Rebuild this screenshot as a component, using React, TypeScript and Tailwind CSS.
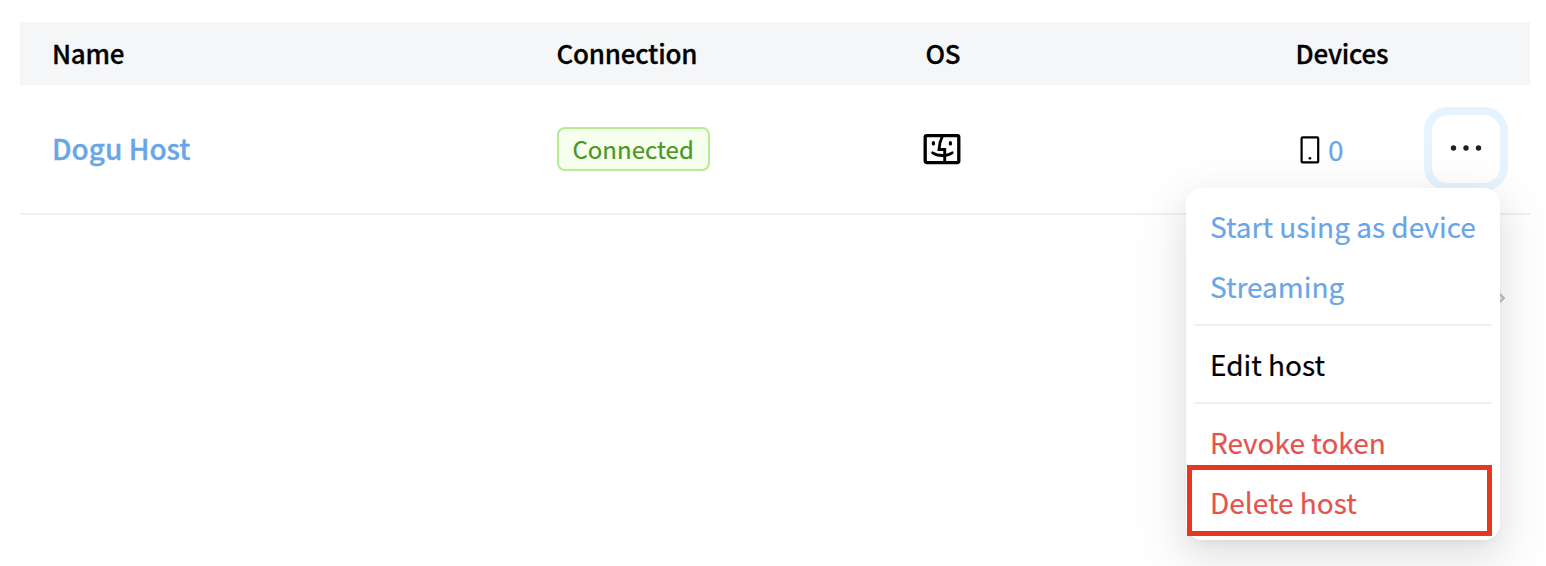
import React from "react";

const columns = "grid grid-cols-[504.5px_369px_370px_1fr] items-center pl-8";

function FinderIcon() {
  return (
    <svg width="38" height="32" viewBox="0 0 38 32" fill="none" stroke="#000" strokeWidth="3.3" className="-ml-[3px] block">
      <rect x="2.2" y="2.6" width="33.6" height="27" rx="1.5" />
      <path d="M19.6 2.5C17.5 7 16.2 11.5 16 16.5H21.7V29.5" strokeWidth="2.9" />
      <path d="M9.6 19.8c5.2 3.6 14.4 3.6 19.6 0" strokeWidth="2.8" strokeLinecap="round" />
      <path d="M10.4 9.7v1.2M27.4 9.7v1.2" strokeLinecap="round" strokeWidth="3.2" />
    </svg>
  );
}

function PhoneIcon() {
  return (
    <svg width="20" height="28" viewBox="0 0 20 28" fill="none" stroke="#000" strokeWidth="2.2" className="block">
      <rect x="1.6" y="1.4" width="16.6" height="25" rx="1" />
      <circle cx="9.9" cy="22.3" r="1.4" fill="#000" stroke="none" />
    </svg>
  );
}

function DotsIcon() {
  return (
    <svg width="34" height="8" viewBox="0 0 34 8" fill="#1f1f1f">
      <circle cx="4.5" cy="4" r="2.7" />
      <circle cx="17" cy="4" r="2.7" />
      <circle cx="29.5" cy="4" r="2.7" />
    </svg>
  );
}

function HostMenu() {
  return (
    <div className="absolute left-[1186px] top-[188px] flex h-[352px] w-[314px] flex-col rounded-2xl bg-white p-2 text-[28px] shadow-[0_12px_32px_0_rgba(0,0,0,0.08),0_6px_12px_-8px_rgba(0,0,0,0.12),0_18px_56px_16px_rgba(0,0,0,0.05)]">
      <button className="h-[60px] whitespace-nowrap px-4 text-left leading-[60px] text-[#6aa5e8]">Start using as device</button>
      <button className="h-[60px] px-4 text-left leading-[60px] text-[#6aa5e8]">Streaming</button>
      <div className="my-2 h-0.5 shrink-0 bg-[#f0f0f0]" />
      <button className="h-[60px] px-4 text-left leading-[60px] text-black">Edit host</button>
      <div className="my-2 h-0.5 shrink-0 bg-[#f0f0f0]" />
      <button className="h-[60px] px-4 text-left leading-[60px] text-[#e5534f]">Revoke token</button>
      <button className="h-[60px] px-4 text-left leading-[60px] text-[#e5534f]">Delete host</button>
      <div className="pointer-events-none absolute left-[1.4px] top-[277px] h-[71px] w-[305px] border-[5px] border-[#e63820]" />
    </div>
  );
}

export default function App() {
  return (
    <main className="relative h-[566px] w-[1546px] overflow-hidden bg-white pl-5 pr-4 pt-[22px] font-['Noto_Sans_CJK_KR',sans-serif] text-black [-webkit-text-stroke:0.2px]">
      <div className={`${columns} h-[63px] bg-[#f5f6f8] pb-0.5 text-[26px] font-medium leading-[61px] tracking-[-0.25px] [-webkit-text-stroke:0.3px]`}>
        <span>Name</span>
        <span>Connection</span>
        <span>OS</span>
        <span>Devices</span>
      </div>
      <div className={`${columns} h-[130px] border-b-2 border-[#f0f0f0]`}>
        <a className="-mt-0.5 text-[28px] font-medium text-[#6aa5e8] [-webkit-text-stroke:0.35px]">Dogu Host</a>
        <div className="flex">
          <span className="flex h-11 items-center rounded-lg border-2 border-[#b7eb8f] bg-[#f6ffed] px-3.5 text-[24px] leading-10 text-[#4a9626]">Connected</span>
        </div>
        <FinderIcon />
        <div className="flex items-center pl-[4.5px]">
          <span className="mt-0.5"><PhoneIcon /></span>
          <span className="ml-2 w-[17px] text-[28px] leading-10 text-[#6aa5e8]">0</span>
          <button className="ml-[87px] flex h-[68px] w-[68px] items-center justify-center rounded-2xl bg-white pb-[3px] shadow-[0_0_0_8px_#e6f4ff]">
            <DotsIcon />
          </button>
        </div>
      </div>
      <div className="mt-[75px] flex justify-end pr-6">
        <svg width="10" height="16" viewBox="0 0 10 16" fill="none" stroke="#bfbfbf" strokeWidth="2.4">
          <path d="m3 3.5 4.7 4.5L3 12.5" />
        </svg>
      </div>
      <HostMenu />
    </main>
  );
}
